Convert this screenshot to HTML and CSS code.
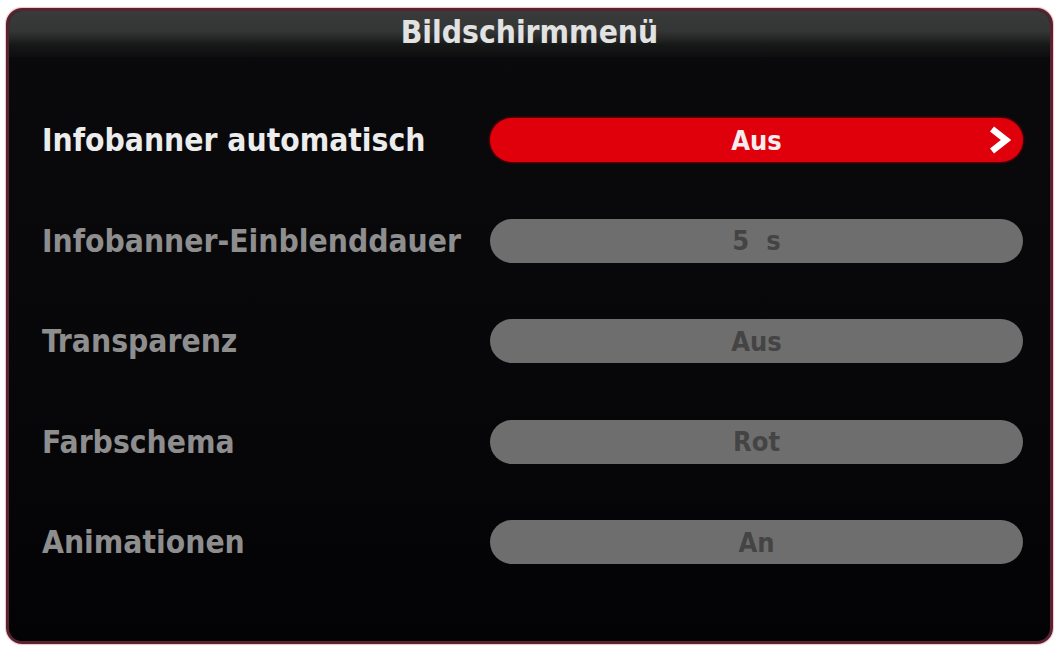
FILE: index.html
```html
<!DOCTYPE html>
<html lang="de">
<head>
<meta charset="utf-8">
<title>Bildschirmmenü</title>
<link rel="stylesheet" href="styles.css">
</head>
<body>
<div class="frame">
  <div class="header"><span class="title">Bildschirmmenü</span></div>
  <div class="rows">
    <div class="row active">
      <div class="label">Infobanner automatisch</div>
      <div class="pill red"><span class="value">Aus</span>
        <svg class="chev" width="26" height="30" viewBox="0 0 26 30"><polyline points="5,4 19,15 5,26" fill="none" stroke="#ffffff" stroke-width="6.5" stroke-linejoin="miter" stroke-miterlimit="3"/></svg>
      </div>
    </div>
    <div class="row">
      <div class="label">Infobanner-Einblenddauer</div>
      <div class="pill"><span class="value">5&nbsp;&nbsp;s</span></div>
    </div>
    <div class="row">
      <div class="label">Transparenz</div>
      <div class="pill"><span class="value">Aus</span></div>
    </div>
    <div class="row">
      <div class="label">Farbschema</div>
      <div class="pill"><span class="value">Rot</span></div>
    </div>
    <div class="row">
      <div class="label">Animationen</div>
      <div class="pill"><span class="value">An</span></div>
    </div>
  </div>
</div>
</body>
</html>
```
FILE: styles.css
```css
html, body {
  margin: 0;
  padding: 0;
  background: #ffffff;
}
body {
  width: 1056px;
  height: 646px;
  overflow: hidden;
  font-family: "DejaVu Sans", "Liberation Sans", sans-serif;
  font-stretch: condensed;
}
.frame {
  box-sizing: border-box;
  margin: 8px 0 0 6px;
  width: 1047px;
  height: 636px;
  border: 3px solid #5a2230;
  border-radius: 16px;
  box-shadow: 0 0 1px 1px #f2c4ca;
  background: linear-gradient(180deg, #0a0a0d 0%, #07070a 60%, #030305 100%);
  overflow: hidden;
  display: flex;
  flex-direction: column;
}
.header {
  height: 46px;
  flex: none;
  background: linear-gradient(180deg, #383b3a 0px, #333635 20px, #262828 27px, #161717 34px, #0e0e10 46px);
  display: flex;
  justify-content: center;
  align-items: flex-start;
}
.title {
  color: #e2e2e2;
  font-weight: bold;
  font-size: 31.5px;
  line-height: 42px;
}
.rows {
  display: flex;
  flex-direction: column;
  gap: 56.5px;
  padding: 61px 27px 0 33px;
}
.row {
  height: 44px;
  display: flex;
  align-items: center;
}
.label {
  width: 448px;
  flex: none;
  color: #8e8e8e;
  font-weight: bold;
  font-size: 31.5px;
  white-space: nowrap;
}
.row.active .label {
  color: #ececec;
}
.pill {
  position: relative;
  flex: 1;
  height: 44px;
  border-radius: 22px;
  background: #6e6e6e;
  display: flex;
  justify-content: center;
  align-items: center;
}
.pill .value {
  color: #444444;
  font-size: 27px;
  font-weight: bold;
}
.pill.red {
  background: #e0000c;
  box-shadow: 0 0 2px 1px #6a0006;
}
.pill.red .value {
  color: #f6eeee;
}
.chev {
  position: absolute;
  right: 10px;
  top: 7px;
}
```
